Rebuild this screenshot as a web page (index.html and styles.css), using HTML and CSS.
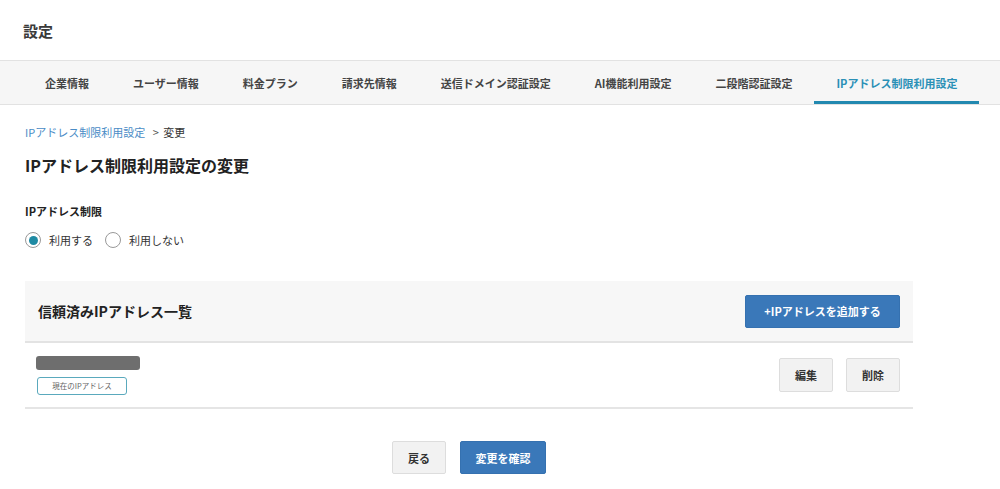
FILE: index.html
```html
<!DOCTYPE html>
<html lang="ja">
<head>
    <meta charset="UTF-8">
    <title>設定</title>
    <link rel="stylesheet" href="styles.css">
</head>
<body>
    <header class="page-header">
        <h1 class="page-title">設定</h1>
    </header>
    <nav class="tabs">
        <a class="tab">企業情報</a>
        <a class="tab">ユーザー情報</a>
        <a class="tab">料金プラン</a>
        <a class="tab">請求先情報</a>
        <a class="tab">送信ドメイン認証設定</a>
        <a class="tab">AI機能利用設定</a>
        <a class="tab">二段階認証設定</a>
        <a class="tab active">IPアドレス制限利用設定</a>
    </nav>
    <main class="content">
        <div class="breadcrumb">
            <a class="crumb-link">IPアドレス制限利用設定</a>
            <span class="crumb-sep">&gt;</span>
            <span>変更</span>
        </div>
        <h2 class="heading">IPアドレス制限利用設定の変更</h2>

        <div class="field-label">IPアドレス制限</div>
        <div class="radios">
            <label class="radio checked"><span class="radio-dot"></span>利用する</label>
            <label class="radio"><span class="radio-dot"></span>利用しない</label>
        </div>

        <section class="card">
            <div class="card-head">
                <h3 class="card-title">信頼済みIPアドレス一覧</h3>
                <button class="btn btn-primary btn-add">+IPアドレスを追加する</button>
            </div>
            <div class="ip-row">
                <div class="ip-info">
                    <div class="ip-mask"></div>
                    <span class="badge">現在のIPアドレス</span>
                </div>
                <div class="row-actions">
                    <button class="btn btn-plain">編集</button>
                    <button class="btn btn-plain">削除</button>
                </div>
            </div>
        </section>

        <div class="footer-actions">
            <button class="btn btn-plain">戻る</button>
            <button class="btn btn-primary btn-confirm">変更を確認</button>
        </div>
    </main>
</body>
</html>
```

FILE: styles.css
```css
body {
    margin: 0;
    font-family: "Noto Sans CJK JP", "Noto Sans", sans-serif;
    color: #333;
    background: #fff;
}

.page-header {
    height: 60px;
    display: flex;
    align-items: center;
    padding-left: 23px;
    border-bottom: 1px solid #e2e2e2;
}

.page-title {
    margin: 0;
    font-size: 15px;
    font-weight: bold;
    color: #3a3a3a;
}

.tabs {
    display: flex;
    height: 43px;
    padding-left: 23px;
    background: #f6f6f6;
    border-bottom: 1px solid #e2e2e2;
}

.tab {
    display: flex;
    align-items: center;
    padding: 3px 22px 0;
    font-size: 11px;
    font-weight: bold;
    color: #444;
    border-bottom: 3px solid transparent;
}

.tab.active {
    color: #2a90b6;
    border-bottom-color: #2289b0;
}

.content {
    padding: 19px 25px 0;
    width: 888px;
}

.breadcrumb {
    font-size: 11px;
    line-height: 16px;
    color: #333;
}

.crumb-link {
    color: #4a8cc6;
}

.crumb-sep {
    margin: 0 2px 0 5px;
    color: #555;
}

.heading {
    margin: 13px 0 0;
    font-size: 16px;
    line-height: 24px;
    font-weight: bold;
    color: #222;
}

.field-label {
    margin-top: 26px;
    font-size: 11px;
    line-height: 16px;
    font-weight: bold;
    color: #222;
}

.radios {
    display: flex;
    gap: 12px;
    margin-top: 12px;
    height: 18px;
    align-items: center;
}

.radio {
    display: flex;
    align-items: center;
    gap: 8px;
    font-size: 11px;
    color: #333;
}

.radio-dot {
    width: 16px;
    height: 16px;
    box-sizing: border-box;
    border: 1.5px solid #999;
    border-radius: 50%;
    display: flex;
    align-items: center;
    justify-content: center;
}

.radio.checked .radio-dot::after {
    content: '';
    width: 9px;
    height: 9px;
    border-radius: 50%;
    background: #1f8aa3;
}

.card {
    margin-top: 32px;
}

.card-head {
    display: flex;
    align-items: center;
    justify-content: space-between;
    height: 60px;
    padding: 0 13px;
    background: #f7f7f7;
    border-bottom: 2px solid #e3e3e3;
}

.card-title {
    margin: 0;
    font-size: 14px;
    font-weight: bold;
    color: #222;
}

.btn {
    font-family: inherit;
    font-size: 11px;
    font-weight: bold;
    border-radius: 2px;
    cursor: pointer;
}

.btn-primary {
    height: 33px;
    padding: 0 16px;
    background: #3a78b9;
    border: 1px solid #3571b0;
    color: #fff;
}

.btn-add {
    width: 155px;
    padding: 0;
}

.btn-plain {
    width: 54px;
    height: 34px;
    background: #f2f2f2;
    border: 1px solid #ddd;
    color: #333;
}

.ip-row {
    display: flex;
    align-items: center;
    justify-content: space-between;
    height: 64px;
    padding: 0 13px 0 11px;
    border-bottom: 2px solid #e5e5e5;
}

.ip-info {
    display: flex;
    flex-direction: column;
    align-items: flex-start;
    gap: 7px;
}

.ip-mask {
    width: 104px;
    height: 14px;
    border-radius: 3px;
    background: #6e6e6e;
}

.badge {
    width: 90px;
    height: 18px;
    box-sizing: border-box;
    margin-left: 1px;
    border: 1px solid #5aa9bd;
    border-radius: 3px;
    font-size: 7.5px;
    line-height: 16px;
    text-align: center;
    color: #666;
}

.row-actions {
    display: flex;
    gap: 13px;
}

.footer-actions {
    display: flex;
    justify-content: center;
    gap: 14px;
    margin-top: 32px;
}

.footer-actions .btn {
    height: 33px;
}

.btn-confirm {
    width: 86px;
    padding: 0;
}
```
